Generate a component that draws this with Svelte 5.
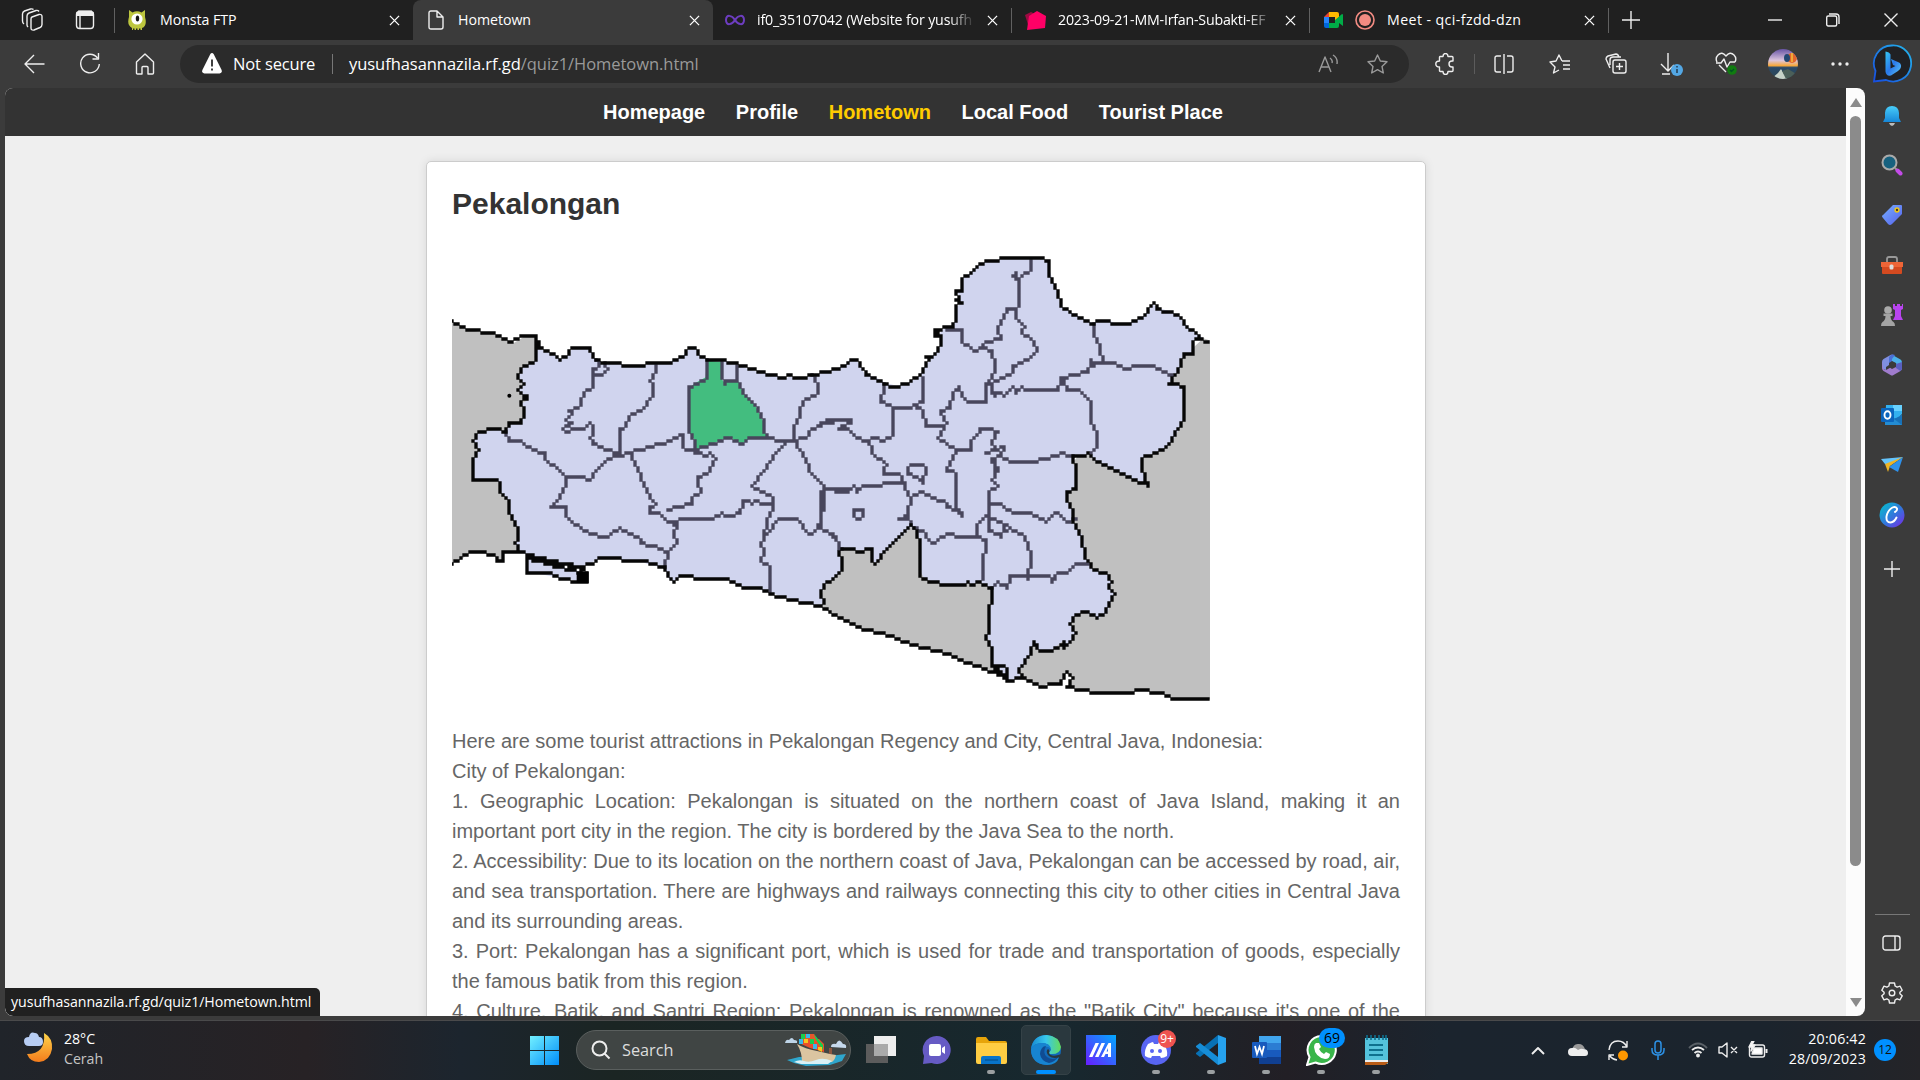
<script>
  const nav = ['Homepage', 'Profile', 'Hometown', 'Local Food', 'Tourist Place'];
  const paragraphs = [
    'Here are some tourist attractions in Pekalongan Regency and City, Central Java, Indonesia:',
    'City of Pekalongan:',
    '1. Geographic Location: Pekalongan is situated on the northern coast of Java Island, making it an important port city in the region. The city is bordered by the Java Sea to the north.',
    '2. Accessibility: Due to its location on the northern coast of Java, Pekalongan can be accessed by road, air, and sea transportation. There are highways and railways connecting this city to other cities in Central Java and its surrounding areas.',
    '3. Port: Pekalongan has a significant port, which is used for trade and transportation of goods, especially the famous batik from this region.'
  ];
  const province =
    'M287 290L295 325 340 340 362 358 380 350 400 322 453 320 457 352 490 370 540 370 560 378 610 378 630 370 680 368 725 350 742 335 747 320 768 320 775 340 800 360 850 360 905 380 960 398 1000 402 1035 418 1050 408 1065 418 1095 415 1120 405 1160 395 1215 376 1230 358 1250 360 1265 385 1275 405 1305 410 1335 428 1370 437 1405 428 1440 408 1450 385 1470 360 1462 350 1475 350 1502 318 1502 290 1485 290 1482 270 1492 270 1498 282 1515 262 1540 258 1550 230 1550 200 1562 190 1550 180 1560 172 1550 155 1568 155 1570 115 1595 95 1610 80 1635 66 1675 60 1680 55 1805 55 1825 65 1830 95 1840 125 1855 160 1862 200 1890 215 1960 250 1975 240 2010 242 2025 250 2065 250 2110 230 2138 192 2155 205 2185 212 2215 228 2245 260 2265 275 2290 295 2265 295 2255 310 2255 338 2228 342 2225 380 2205 405 2188 430 2210 432 2228 445 2228 540 2215 570 2200 600 2180 620 2150 635 2115 650 2105 655 2110 680 2105 690 2115 715 2122 742 2110 725 2065 715 2040 700 2010 680 1960 660 1945 635 1935 645 1900 645 1895 670 1908 680 1905 745 1885 760 1885 785 1898 810 1902 850 1930 890 1938 955 1958 990 2000 995 2015 1030 2010 1045 2022 1060 2015 1080 2002 1120 1975 1135 1940 1120 1925 1115 1905 1125 1892 1150 1905 1180 1892 1210 1875 1220 1870 1202 1835 1230 1800 1230 1778 1210 1772 1240 1750 1275 1735 1295 1745 1318 1700 1320 1685 1300 1675 1280 1658 1280 1658 1230 1640 1185 1650 1170 1650 1100 1658 1090 1658 1045 1630 1035 1615 1025 1595 1035 1580 1028 1575 1035 1515 1035 1480 1025 1452 1015 1442 995 1442 905 1430 875 1415 858 1380 895 1340 930 1305 968 1295 960 1295 928 1255 932 1235 928 1205 928 1195 942 1208 960 1208 992 1185 1010 1155 1035 1145 1060 1150 1085 1140 1100 1055 1078 990 1058 955 1048 910 1042 865 1020 765 1015 745 1005 720 1012 698 1025 680 1010 678 985 630 975 610 967 550 965 540 957 475 957 455 968 440 968 425 985 330 965 265 945 240 935 225 910 238 900 235 860 208 820 205 780 190 765 178 750 178 730 168 720 103 718 98 700 98 660 118 628 100 605 115 580 160 570 170 565 195 575 210 550 245 545 255 510 245 490 265 480 265 467 248 467 235 450 250 435 235 412 245 385 285 362 287 290';
  const west = 'M36 242L85 270 160 282 220 310 250 292 287 290 320 400 300 930 240 935 190 940 190 965 170 965 165 945 130 940 90 937 65 958 36 968Z';
  const east =
    'M2290 295L2314 303 2314 1378 2205 1378 2160 1358 2090 1350 2080 1358 1980 1358 1920 1348 1885 1338 1895 1315 1878 1300 1860 1328 1830 1330 1805 1338 1745 1318 1700 1320 1680 1302 1580 1265 1520 1240 1420 1212 1320 1175 1270 1170 1200 1135 1140 1100 1180 900 1420 840 1700 900 1930 630Z';
  const coast = [
    'M36 242L85 270 160 282 220 310 250 292 287 290',
    'M36 968L65 958 90 937 130 940 165 945 170 965 190 965 190 940 240 935',
    'M2290 295L2306 303',
    'M2306 1378L2205 1378 2160 1358 2090 1350 2080 1358 1980 1358 1920 1348 1885 1338 1895 1315 1878 1300 1860 1328 1830 1330 1805 1338 1745 1318 1700 1320 1680 1302 1580 1265 1520 1240 1420 1212 1320 1175 1270 1170 1200 1135 1140 1100',
    'M248 940L265 955 265 995 330 1002 365 1015 415 1022 440 1022 440 1000 405 980 350 975 265 945',
    'M265 953L300 960 350 984 405 989 425 995',
    'M1655 1280L1690 1310 1700 1318',
    'M1675 1278L1690 1275 1700 1300 1700 1320'
  ];
  const westLines = [
    'M195 575L205 602 245 605 275 630 312 637 318 655 350 680 368 705 382 713 425 712 450 722 460 705 500 655 540 645 565 635 630 625 690 605 725 583 728 620 745 633 775 635',
    'M382 713L380 740 360 775 333 798 375 802 382 830 400 850 450 878 507 888 540 867 590 895 600 908 640 922 680 935 715 908 700 885 712 855 680 850',
    'M680 935L678 985',
    'M470 360L475 378 455 385 460 408 490 408 500 385 495 370',
    'M455 400L455 425 462 437 430 462 420 495 385 512 395 525 382 538 395 550 372 565 385 575 395 567 435 567 450 552 463 567 460 585 448 595 460 612 500 633 540 635',
    'M650 375L648 400 630 425 642 440 635 470 600 515 575 525 560 555 542 565 542 635',
    'M800 362L797 412 765 430 747 445 747 577 768 605 768 632 785 635 800 650 812 640 828 655 800 705 778 712 775 735 787 752 760 775 757 790 715 800 680 810',
    'M565 640L585 665 610 735 635 785 648 793 630 797 630 820 655 822 680 850 745 840 815 840 850 815 858 830 885 832 902 815 905 785 925 780 937 792 950 785 970 792 1003 792',
    'M768 632L820 610 868 590 905 612 930 595 980 592 1035 605 1060 600',
    'M843 365L843 415 855 430 865 420 893 420 910 460 945 495 970 545 975 580 990 595',
    'M893 375L893 420',
    'M1120 405L1132 430 1130 460 1085 487 1078 520 1062 570 1058 600 1100 595 1120 565 1160 545 1215 537',
    'M1045 605L1010 640 975 690 940 742 1003 778 1000 805 985 850 970 890 965 920 975 935 962 965 990 978 992 1055',
    'M970 890L1018 840 1070 840 1105 880 1115 885 1130 860 1148 800 1148 750',
    'M1060 605L1100 655 1105 690 1150 740 1150 750 1230 750',
    'M1130 860L1165 870 1195 905 1195 928'
  ];
  const northLines = [
    'M0 550L35 537 90 537 97 545 65 555 60 565 80 565 110 595 145 605 165 595 195 605 215 585 215 500 185 490 195 430',
    'M145 605L155 640 205 675 195 690',
    'M305 410L305 485 285 492 275 505 235 505 215 500',
    'M285 495L310 510 315 555 370 555 380 550 360 525 365 512 390 500 400 455 415 445 430 465 435 480 450 488 497 488 500 430 515 410 525 375 515 335 480 322 460 330 430 305 430 270 385 268',
    'M480 322L500 305 540 295 530 262 550 225 557 203 588 203 590 230 615 258 605 275 630 295 648 335 625 360 580 380 575 395 545 412 520 430 520 455',
    'M595 200L597 130 585 100 575 110 600 115 635 90 637 60',
    'M505 435L525 465 545 455 555 465 575 445 590 455 605 440 612 447 712 447 725 412 800 398 812 360 825 375 835 368 885 370 910 388 960 380 1005 378 1030 397 1060 403',
    'M822 250L825 290 835 300 845 365',
    'M730 425L740 450 775 450 812 485 815 545 832 575 830 620 815 640',
    'M380 550L350 590 385 608 405 628 440 628 455 632 450 605 475 585 480 565 510 565 530 580 515 605 525 630 500 635 555 620 545 645 575 662 655 662 665 655 712 652 720 643 755 645',
    'M405 628L400 655 385 690',
    'M545 645L520 655 525 690'
  ];
  const southLines = [
    'M10 120L85 122 100 112 115 122 130 112 185 110 195 100 245 102 270 145 265 195 235 210 260 208 275 228',
    'M195 60L195 70 235 75 255 105',
    'M270 42L305 42 315 65 308 100 290 85 262 75 265 55 270 42',
    'M105 180L128 180 128 200 115 208 105 200 105 180',
    'M270 145L308 130 350 155 375 155 385 175 430 190 430 200 410 165 410 75 385 55 395 25',
    'M520 25L530 65 520 90 530 110 510 130 507 245 545 250 570 232',
    'M510 160L545 160 580 190 630 190 680 220 695 195 712 188 740 215 765 208',
    'M275 228L310 240 325 270 345 280 365 262 395 248 420 257 470 258 475 225 500 200 515 208 560 225 545 265',
    'M470 258L500 270 500 310 490 320 487 390',
    'M570 235L610 250 615 272 628 285 633 328 627 385',
    'M515 415L535 395 560 412 567 377 690 377 695 395 715 368 745 365 765 338 800 345',
    'M5 130L5 230 35 250 65 298'
  ];

  // Traces a polyline onto a coarse grid, one square per cell, for the map's stepped borders.
  const CELL = 9;
  function trace(d, dx = 0, dy = 0) {
    const n = d.match(/\d+/g).map(Number);
    const cells = new Set();
    const q = (v) => Math.round(v / CELL);
    for (let i = 0; i + 3 < n.length; i += 2) {
      let x = q(n[i] + dx), y = q(n[i + 1] + dy);
      const x1 = q(n[i + 2] + dx), y1 = q(n[i + 3] + dy);
      const w = Math.abs(x1 - x), h = -Math.abs(y1 - y);
      const sx = x < x1 ? 1 : -1, sy = y < y1 ? 1 : -1;
      let err = w + h;
      cells.add(x + ',' + y);
      while (x !== x1 || y !== y1) {
        const e = 2 * err;
        if (e >= h) { err += h; x += sx; }
        if (e <= w) { err += w; y += sy; }
        cells.add(x + ',' + y);
      }
    }
    return [...cells].map((c) => {
      const [x, y] = c.split(',').map(Number);
      return `M${x * CELL - 5} ${y * CELL - 5}h10v10h-10z`;
    }).join('');
  }
  const inner = [
    ...westLines.map((d) => trace(d)),
    ...northLines.map((d) => trace(d, 1140, 0)),
    ...southLines.map((d) => trace(d, 1140, 630))
  ].join('');
  const outer = [province, ...coast].map((d) => trace(d)).join('');
</script>

{#snippet closeX()}
  <svg class="x" viewBox="0 0 12 12"><path d="M1 1l10 10M11 1L1 11" /></svg>
{/snippet}

<div class="screen">
  <header class="tabs">
    <div class="cell" style:width="64px">
      <svg class="line" width="22" height="24" viewBox="0 0 22 24"><path d="M11 9l7-2.500q3-.5 3 2v8q0 2-2 3l-6 2.500q-3 .5-3-2v-9q0-1.500 1-2ZM7 19q-1-1-1-2V8q0-2 2-3l7-2.500q2-.5 3 1M3 16q-1.500-1-1.500-3V6q0-2 2-3l6-2q2-.5 3 .5" /></svg>
    </div>
    <div class="cell" style:width="42px">
      <svg class="line" width="20" height="20" viewBox="0 0 20 20"><rect x="1.500" y="1.500" width="17" height="17" rx="3" /><path d="M1.500 4h17M3 2.500h14" stroke-width="4" /><path d="M5 6v12" /></svg>
    </div>
    <i class="sep lead"></i>
    <div class="tab first">
      <svg width="18" height="20" viewBox="0 0 18 20"><path fill="#bdc63f" d="M1 0l3.500 2.500Q9 0 13.500 2.500L17 0v7q2.500 9-3 11v2h-1.500v-1.500h-1.500V20H9.500v-1.500H8V20H6.500v-1.500H5V20H4v-2Q-1.500 15 1 7Z" /><circle cx="9" cy="9" r="5.600" fill="#fff" /><ellipse cx="9.500" cy="8.500" rx="1.700" ry="3" fill="#141414" /></svg>
      <span class="t14">Monsta FTP</span>{@render closeX()}
    </div>
    <div class="tab active">
      <svg class="line" width="16" height="20" viewBox="0 0 16 20"><path d="M3 1h6l6 6v10q0 2-2 2H3q-2 0-2-2V3q0-2 2-2ZM9 1v6h6" /></svg>
      <span class="t14">Hometown</span>{@render closeX()}
    </div>
    <div class="tab third">
      <svg width="20" height="12" viewBox="0 0 20 12"><path d="M10 6C7 1 1 0 1 6s6 5 9 0 9-6 9 0-6 5-9 0Z" fill="none" stroke="#6d3dc0" stroke-width="2" /></svg>
      <span class="t14 fade">if0_35107042 (Website for yusufh</span>{@render closeX()}
    </div>
    <i class="sep"></i>
    <div class="tab fourth">
      <svg width="21" height="19" viewBox="0 0 21 19"><path fill="#9c0b42" d="M0 4l6-3 4 2-6 14Z" /><path fill="#f06" d="M12 0l9 5-1 12-18 2 2-14Z" /></svg>
      <span class="t14 fade">2023-09-21-MM-Irfan-Subakti-EF</span>{@render closeX()}
    </div>
    <i class="sep"></i>
    <div class="tab fifth">
      <svg width="19" height="16" viewBox="0 0 19 16"><path fill="#e94235" d="M0 5l5-5v5Z" /><path fill="#2684fc" d="M0 5h5v6H0z" /><path fill="#0066da" d="M0 11h5v5H2q-2 0-2-2Z" /><path fill="#ffba00" d="M5 0h8q2 0 2 2v5l-4 2V5H5Z" /><path fill="#00ac47" d="M5 11h6V8l7-6q1 0 1 1v11l-4-3v3q0 2-2 2H5Z" /></svg>
      <svg class="rec" width="20" height="20" viewBox="0 0 20 20"><circle cx="10" cy="10" r="9" fill="none" stroke="#f28b82" stroke-width="1.600" /><circle cx="10" cy="10" r="6" fill="#f28b82" /></svg>
      <span class="t14 meet">Meet - qci-fzdd-dzn</span>{@render closeX()}
    </div>
    <i class="sep"></i>
    <div class="cell" style:width="45px"><svg class="line" width="18" height="18" viewBox="0 0 18 18"><path d="M9 0v18M0 9h18" /></svg></div>
    <div class="cell winbtns">
      <svg class="line" width="14" height="14" viewBox="0 0 14 14"><path d="M0 7h14" /></svg>
      <svg class="line" width="14" height="14" viewBox="0 0 14 14"><rect x=".7" y="3" width="10" height="10" rx="1.500" /><path d="M3 1h7q3 0 3 3v7" /></svg>
      <svg class="line" width="14" height="14" viewBox="0 0 14 14"><path d="M.5.5l13 13M13.500.5l-13 13" /></svg>
    </div>
  </header>

  <div class="toolbar">
    <div class="cell w56"><svg class="line" width="22" height="20" viewBox="0 0 22 20"><path d="M21.500 10H2M11 1l-9 9 9 9" /></svg></div>
    <div class="cell w56"><svg class="line" width="22" height="22" viewBox="0 0 22 22"><path d="M18.500 5A9.300 9.300 0 1 0 20.300 11M19.500 0v6h-6" /></svg></div>
    <div class="cell w55 home"><svg class="line" width="20" height="22" viewBox="0 0 20 22"><path d="M1.500 9l8.500-8 8.500 8v11q0 1-1 1H13v-6.500q0-1-1-1H8q-1 0-1 1V21H2.500q-1 0-1-1Z" /></svg></div>
    <div class="address">
      <svg width="20" height="21" viewBox="0 0 20 21"><path fill="#fff" d="M10 0q1 0 1.600 1l8 16q.8 3-2 3.500H2.400q-3-.5-2-3.500l8-16Q9 0 10 0Z" /><path d="M10 6.500v7M10 15.500v2" stroke="#2b2b2b" stroke-width="1.800" /></svg>
      <span class="t17 ns">Not secure</span><i></i>
      <span class="t17 url">yusufhasannazila.rf.gd<em>/quiz1/Hometown.html</em></span>
      <svg class="line dim aloud" width="20" height="20" viewBox="0 0 20 20"><path d="M1 18L7 3l6 15M3 13h8M12 4q3 2 2 5M15 1q5 3 4 9" /></svg>
      <svg class="line dim" width="21" height="20" viewBox="0 0 21 20"><path d="M10.500 1l2.800 6 6.700.8-5 4.600 1.300 6.600-5.800-3.300L4.700 19 6 12.400 1 7.800 7.700 7Z" /></svg>
    </div>
    <div class="cell w56 ext"><svg class="line" width="20" height="22" viewBox="0 0 20 22"><path d="M5 3.500h3q0-3 2.500-3t2.500 3h4q1 0 1 1v3.500h-1q-3 0-3 3t3 3h1v3.500q0 1-1 1h-4q0 3-2.500 3T8 18.500H5.500q-1 0-1-1V14Q.8 14 .8 11t3.700-3V4.500q0-1 .5-1Z" /></svg></div>
    <i class="tsep"></i>
    <div class="cell w56"><svg class="line" width="20" height="20" viewBox="0 0 20 20"><path d="M7 2H3Q1 2 1 4v12q0 2 2 2h4M13 2h4q2 0 2 2v12q0 2-2 2h-4M10 0v20" /></svg></div>
    <div class="cell w56"><svg class="line" width="22" height="20" viewBox="0 0 22 20"><path d="M13 7l-3-6-3 6-6 1 5 5-1.500 6L10 16M13 7h8M14 11h7M14 15h7" /></svg></div>
    <div class="cell w55"><svg class="line" width="22" height="21" viewBox="0 0 22 21"><rect x="8" y="7" width="13" height="13" rx="2" /><path d="M14.500 10v7M11 13.500h7M5 15L1 6q0-2 2-3l8-2q2 0 3 3M5 12V7q0-3 3-3h8" /></svg></div>
    <div class="cell w56"><svg class="line" width="24" height="24" viewBox="0 0 24 24"><path d="M9 1v17M2 12l7 7 6-6M3 22h8" /><circle cx="18" cy="18" r="6" fill="#53a7e4" stroke="none" /><path d="M18 17v4M18 14v1.500" stroke="#234" /></svg></div>
    <div class="cell w55 heart"><svg class="line" width="22" height="23" viewBox="0 0 22 23"><path d="M2 10q-2-4 1-7 4-4 8 1 4-5 8-1 3 3 1 7M1 11h5l3-4 3 8 3-5h5M4 13l7 7" /><circle cx="17" cy="18" r="4.800" fill="#107c10" stroke="none" /><path d="M15 18l1.500 1.500L19 17" stroke="#052" /></svg></div>
    <div class="cell w57">
      <svg width="30" height="30" viewBox="0 0 30 30"><defs><clipPath id="av"><circle cx="15" cy="15" r="15" /></clipPath><linearGradient id="sky" x2="0" y2="1"><stop stop-color="#6754a5" /><stop offset=".38" stop-color="#dcc5dd" /><stop offset=".55" stop-color="#f7a93f" /><stop offset=".62" stop-color="#2a4968" /><stop offset="1" stop-color="#2b4552" /></linearGradient></defs><g clip-path="url(#av)"><path fill="url(#sky)" d="M0 0h30v30H0z" /><circle cx="24" cy="9" r="5" fill="#e2662c" /><path d="M24 4v9" stroke="#f5c13c" stroke-width="1.500" /><ellipse cx="19" cy="9" rx="3" ry="4" fill="#234873" /><path d="M3 30l7-6 3-4 3 5 4 5Z" fill="#c6d2c8" /><path d="M14 22l6-2 10 6v4H18Z" fill="#4b5f59" /></g></svg>
    </div>
    <div class="cell w57"><svg width="18" height="4" viewBox="0 0 18 4" fill="#eee"><circle cx="2" cy="2" r="1.700" /><circle cx="9" cy="2" r="1.700" /><circle cx="16" cy="2" r="1.700" /></svg></div>
    <div class="cell bing"><svg width="40" height="40" viewBox="0 0 40 40"><defs><linearGradient id="bg" x1="1" x2="0" y2="1"><stop stop-color="#24b8ee" /><stop offset="1" stop-color="#174de0" /></linearGradient><linearGradient id="bb" x2="1" y2="1"><stop stop-color="#35c6f4" /><stop offset=".5" stop-color="#2a78ea" /><stop offset="1" stop-color="#5cc9f7" /></linearGradient></defs><path d="M20 1.500A18 18 0 1 1 14 36L2 37.500 3.500 27A18 18 0 0 1 20 1.500Z" fill="#202124" stroke="url(#bg)" stroke-width="1.800" /><path d="M13.500 7.500q4 .5 5 3v14l5-2.500-2.500-1-2-6 8 3.500q2.500 1.500 2 4.500-.5 2.500-3 4l-7 4.500q-5 1-5.500-4Z" fill="url(#bb)" /></svg></div>
  </div>

  <div class="body">
    <div class="page">
      <nav>{#each nav as item}<a class:on={item === 'Hometown'}>{item}</a>{/each}</nav>
      <main>
        <article>
          <h1>Pekalongan</h1>
          <svg class="map" viewBox="36 12 2274 1374">
            <path class="land" d={west} /><path class="land" d={east} />
            <path class="prov" d={province} />
            <path class="prov" d="M265 955V995L365 1015 415 1022 440 1000Z" />
            <path d="M800 362L797 412 765 430 747 445 747 577 768 605 768 632 820 610 868 590 905 612 930 595 990 595 975 580 970 545 945 495 910 460 893 420 865 420 855 430 843 415 843 365Z" fill="#43bd7f" />
            <path d={inner} fill="#48465c" />
            <path d={outer} fill="#060606" />
            <path d="M410 995h36v34h-36z" /><circle cx="208" cy="467" r="6" />
          </svg>
          {#each paragraphs as p}<p>{p}</p>{/each}
          <p class="last">4. Culture, Batik, and Santri Region: Pekalongan is renowned as the "Batik City" because it's one of the</p>
        </article>
      </main>
      <div class="status t14">yusufhasannazila.rf.gd/quiz1/Hometown.html</div>
    </div>
    <div class="scroll">
      <svg width="12" height="9" viewBox="0 0 12 9"><path d="M6 0l6 9H0Z" fill="#8b8b8b" /></svg>
      <div class="thumb"></div>
      <svg class="down" width="12" height="9" viewBox="0 0 12 9"><path d="M0 0h12L6 9Z" fill="#8b8b8b" /></svg>
    </div>
    <aside>
      <div class="side s1"><svg width="18" height="22" viewBox="0 0 18 22"><defs><linearGradient id="bell" x2="0" y2="1"><stop stop-color="#48cdfa" /><stop offset="1" stop-color="#1787d8" /></linearGradient></defs><path d="M9 1q6.500 0 7 7v5l2 4H0l2-4V8q.5-7 7-7Z" fill="url(#bell)" /><path d="M6 18h6q-1 3-3 3t-3-3Z" fill="#bbb" /></svg></div>
      <div class="side mag"><svg width="22" height="22" viewBox="0 0 22 22"><circle cx="8.500" cy="8.500" r="7" fill="#17617f" stroke="#aaa" stroke-width="2" /><path d="M14 14l2 2" stroke="#999" stroke-width="2" /><path d="M16.500 16.500l3 3" stroke="#c34be8" stroke-width="4" stroke-linecap="round" /></svg></div>
      <div class="side"><svg width="22" height="22" viewBox="0 0 22 22"><defs><linearGradient id="tag" x2="1" y2="1"><stop stop-color="#77b0ff" /><stop offset="1" stop-color="#5560ec" /></linearGradient></defs><path d="M12 1h8q1 0 1 1v8L11 20q-2 2-4 0l-5-6q-2-2 0-3Z" fill="url(#tag)" /><circle cx="16" cy="6" r="1.900" fill="#432" stroke="#ecc51c" stroke-width="1.500" /></svg></div>
      <div class="side box"><svg width="24" height="20" viewBox="0 0 24 20"><path d="M7 7V4q0-2 2-2h6q2 0 2 2v3" fill="none" stroke="#999" stroke-width="1.800" /><path d="M1 7h22v5H1z" fill="#ee6537" /><path d="M2 12h20v6q0 1-1 1H3q-1 0-1-1Z" fill="#d44a20" /><rect x="9.500" y="9.500" width="4" height="5" rx="1.500" fill="#ddd" /></svg></div>
      <div class="side"><svg width="24" height="24" viewBox="0 0 24 24"><path d="M13 1h2v2h2V1h3v2h2V1h1v5l-2 1v6l2 4H13l2-4V7l-2-1Z" fill="#b844ef" /><circle cx="8" cy="7" r="3.800" fill="#aaa" /><path d="M3.500 10.500h9v2.500h-2q0 4 3 6 1.500 1 1.500 4H1q0-3 1.500-4 3-2 3-6h-2Z" fill="#a4a4a4" /></svg></div>
      <div class="side"><svg width="22" height="22" viewBox="0 0 22 22"><path d="M9.500 1q1.500-1 3 0L8 4v7l-3 2v3l-3-1q-1-.6-1-2V8q0-2 1.500-3Z" fill="#7f8fe0" /><path d="M8 4l3.500-3 8 4.500q1.500 1 1.500 3V14l-6-4.500L8 6Z" fill="#4bb0e8" /><path d="M8 3v8l3-2V5l3-4q-2-1-4 0Z" fill="#4a6fd4" /><path d="M1 7l1 7.500q2 2 4 1l9-5 6 3.500q0 2-1.500 3l-7 4q-1.500 1-3 0l-7-4Q1 16 1 14Z" fill="#a07ccd" /><path d="M15 10l6-2v6q0 2-1.500 3L15 14Z" fill="#5a60c0" /><path d="M8 9l3-2 4 2v4l-4 2-3-2Z" fill="#3b3b3b" /></svg></div>
      <div class="side"><svg width="22" height="22" viewBox="0 0 22 22"><path d="M5 1h16v9l-2 2v9H4Z" fill="#33b1ef" /><path d="M12 1h9v6h-9z" fill="#68d1ff" /><path d="M4 14h12l5-3v10H4Z" fill="#238cd3" /><path d="M21 11v10l-8-6Z" fill="#1871b8" /><rect y="4" width="13" height="14" rx="1" fill="#0b65bd" /><ellipse cx="6.500" cy="11" rx="3" ry="3.700" fill="none" stroke="#fff" stroke-width="1.900" /></svg></div>
      <div class="side"><svg width="23" height="18" viewBox="0 0 23 18"><path d="M0 3L22 1 9 9 4 8Z" fill="#65c4fb" /><path d="M22 1L4 8l3 8 2-6Z" fill="#eeb424" /><path d="M22 1L8 11l9 5Z" fill="#2e91eb" /></svg></div>
      <div class="side"><svg width="26" height="26" viewBox="0 0 26 26"><defs><linearGradient id="cv" x2="1" y2="1"><stop stop-color="#00c4cc" /><stop offset=".55" stop-color="#3474dc" /><stop offset="1" stop-color="#7d24e8" /></linearGradient></defs><circle cx="13" cy="13" r="12.500" fill="url(#cv)" /><path d="M16 10q2.500-1 2-3.500-1.500-2.500-4.500-1-5 3-6 9-.5 6 4 6 4-.5 6-5" fill="none" stroke="#fff" stroke-width="1.900" stroke-linecap="round" /></svg></div>
      <div class="side plus"><svg class="line" width="16" height="16" viewBox="0 0 16 16"><path d="M8 0v16M0 8h16" /></svg></div>
      <div class="foot"><i></i>
        <svg class="line" width="20" height="16" viewBox="0 0 20 16"><rect x="1" y="1" width="17" height="14" rx="2.500" /><path d="M13 1v14" /></svg>
        <svg class="line gear" width="22" height="22" viewBox="0 0 22 22"><path d="M8.500 1h5l.6 3 2 1.200 3-1 2.100 4.100-2.300 2v1.500l2.300 2-2.300 4-2.800-1-2 1.200-.6 3h-5l-.6-3-2-1.200-2.900 1-2.200-4 2.300-2v-1.500l-2.300-2L3 4.200l2.900 1 2-1.200Z" /><circle cx="11" cy="11" r="2.800" /></svg>
      </div>
    </aside>
  </div>

  <footer>
    <svg class="moon" width="30" height="36" viewBox="0 0 30 36"><defs><linearGradient id="mn" x2="0" y2="1"><stop stop-color="#ffd54b" /><stop offset="1" stop-color="#f47c1c" /></linearGradient></defs><path d="M20 3q9 5 8 16-2 12-13 13-9 0-12-8 19 0 17-21Z" fill="url(#mn)" /><path d="M5 16q-5 0-5-5 0-4 5-4 1-6 6-4 3 0 4 4 4 0 4 5 0 4-4 4Z" fill="#b7cdf4" /></svg>
    <div class="weather t14"><span>28°C</span><span>Cerah</span></div>
    <div class="start"><svg width="29" height="29" viewBox="0 0 29 29"><defs><linearGradient id="w" x2="1" y2="1"><stop stop-color="#72f0ff" /><stop offset="1" stop-color="#008df8" /></linearGradient></defs><path fill="url(#w)" d="M0 0h14v14H0zM15 0h14v14H15zM0 15h14v14H0zM15 15h14v14H15z" /></svg></div>
    <div class="search">
      <svg class="glass" width="20" height="20" viewBox="0 0 20 20"><circle cx="8.500" cy="8.500" r="7" /><path d="M13.500 13.500l5 5" /></svg>
      <span>Search</span>
      <svg width="62" height="34" viewBox="0 0 62 34"><path d="M2 27l12-3 30-1 17-2-4 7-12 4-24 1-12-3Z" fill="#2fa6cc" /><path d="M12 11q8 5 20 7l13 3 6 1q-1 5-4 7H17q0-10-5-18Z" fill="#dbc5a1" />
        <path d="M16 1h13l4 6H16Z" fill="#e5562c" /><path d="M14 6h20l5 5v8l-14-4-11-5Z" fill="#e94f2b" /><path d="M16 1h4v5h-4zM29 1l4 5 5 6v5l-7-10ZM25 6h4v5h-4z" fill="#17ce4f" /><path d="M21 1h4v4h-4zM14 6h4v5h-4zM28 11h4v5h-4z" fill="#39b8ed" /><path d="M19 6h4v4h-4zM33 14h4v5l-4-2z" fill="#f7c61b" />
        <path d="M9 29q5-3 10-1t12-1 16 1l-4 3H16Z" fill="#d8f0f5" /><path d="M44 15h3v6h-3" fill="#8d5740" /><path d="M0 10q1-4 4-3 3-4 5 0 4 0 3 3Z" fill="#bed4e7" /><path d="M46 14q0-4 5-3 3-7 7 0 4 0 3 4Z" fill="#c6d9ed" /></svg>
    </div>
    <div class="apps">
      <div><svg width="30" height="28" viewBox="0 0 30 28"><path fill="#eee" d="M8 0h22v20H8z" /><path fill="#5c5c5c" d="M0 8h22v19H0z" /><path fill="#aaa" d="M8 8h14v12H8z" /></svg></div>
      <div><svg width="29" height="28" viewBox="0 0 29 28"><path d="M14.500 0a14 14 0 1 1-5 27L1 28l1-8A14 14 0 0 1 14.500 0Z" fill="#665bc4" /><rect x="7" y="8" width="12" height="12" rx="2" fill="#fff" /><path d="M20 12l3-2v8l-3-2Z" fill="#fff" /></svg></div>
      <div class="run"><svg width="31" height="27" viewBox="0 0 31 27"><path d="M0 2q0-2 2-2h8l3 4h16q2 0 2 2v19H0Z" fill="#e7a40a" /><path d="M0 6h31v19q0 2-2 2H2q-2 0-2-2Z" fill="#ffcd43" /><path d="M5 27v-6q0-2 2-2h16q2 0 2 2v6Z" fill="#0874ca" /><path d="M9 23h13" stroke="#044880" /></svg></div>
      <div class="run current"><svg width="30" height="30" viewBox="0 0 30 30"><defs><linearGradient id="e1" x2="1"><stop stop-color="#1688d2" /><stop offset=".5" stop-color="#38c7ec" /><stop offset="1" stop-color="#65dc59" /></linearGradient></defs><circle cx="15" cy="15" r="15" fill="#126bbb" /><path d="M0 14Q2 0 16 0q12 1 14 12-1 8-11 7-2-1 1-4-1-7-9-7Q3 8 0 14Z" fill="url(#e1)" /><path d="M0 14Q3 8 11 8q8 0 9 6-4-4-8-1-6 9 5 12 7 1 11-3-2 8-12 8Q0 29 0 14Z" fill="#1784d0" /><path d="M15 11q-5 0-6 8 1 7 9 9 6-1 9-6-5 4-11 0-5-4-1-11Z" fill="#104c93" /><path d="M17 14q2 1 1 4 2 5 13 1v2q-8 4-13 0-4-4-1-7Z" fill="#2a383e" /></svg></div>
      <div><svg width="30" height="30" viewBox="0 0 30 30"><defs><linearGradient id="ma" x1="1" x2="0" y2="1"><stop stop-color="#00aaff" /><stop offset="1" stop-color="#691cff" /></linearGradient></defs><path d="M0 0h30v30H0z" fill="url(#ma)" /><path d="M3 22L9.500 8h3.500L6.500 22ZM9 22l6.500-14H19l-6.500 14ZM15 22l7.500-14H25v14h-3v-3h-2.500L18 22ZM20.500 16.500H22V13Z" fill="#fff" /></svg></div>
      <div class="run"><svg width="30" height="30" viewBox="0 0 30 30"><circle cx="15" cy="15" r="15" fill="#5865f2" /><path d="M7 9q4-2 5-2l1 2h4l1-2q2 0 5 2 4 6 3 12-3 2-6 2l-1-2h-8l-1 2q-3 0-6-2-1-6 3-12Z" fill="#fff" /><circle cx="11" cy="16" r="2" fill="#5865f2" /><circle cx="19" cy="16" r="2" fill="#5865f2" /></svg><b>9+</b></div>
      <div class="run"><svg width="30" height="30" viewBox="0 0 30 30"><path d="M22 0l8 3v24l-8 3Z" fill="#26a2ee" /><path d="M22 0v8L4 22l-4-3v-1Z" fill="#0871b5" /><path d="M22 30v-8L4 8l-4 3v1Z" fill="#168dd7" /></svg></div>
      <div class="run"><svg width="29" height="28" viewBox="0 0 29 28"><path fill="#41a5ee" d="M7 0h22v7H7z" /><path fill="#2b7cd3" d="M7 7h22v7H7z" /><path fill="#185abd" d="M7 14h22v7H7z" /><path fill="#103f91" d="M7 21h22v7H7z" /><rect y="6" width="15" height="16" rx="1" fill="#185abd" /><path d="M3 10l2 8 2.500-7 2.500 7 2-8" stroke="#fff" stroke-width="1.800" fill="none" /></svg></div>
      <div class="run"><svg width="31" height="31" viewBox="0 0 31 31"><path d="M15.500 1a14 14 0 1 1-6 26.500L1 30l2.500-8A14 14 0 0 1 15.500 1Z" fill="#39b54a" stroke="#fff" stroke-width="2" /><path d="M10 8l3 0 2 4-2 2q2 4 5 5l2-2 4 2q0 5-5 5Q9 22 8 12q0-3 2-4Z" fill="#fff" /></svg><b class="wa">69</b></div>
      <div class="run"><svg width="23" height="30" viewBox="0 0 23 30"><path d="M0 3h23v26H0z" fill="#54c2dc" /><path d="M0 26h23v2l-3 2H0Z" fill="#b95c17" /><path d="M0 25h23v2H0z" fill="#eee" /><path d="M2 0v5M6 0v5M10 0v5M14 0v5M18 0v5M21 0v5" stroke="#0e708f" stroke-width="1.600" /><path d="M4 10h14M4 15h14M4 20h14" stroke="#0e708f" stroke-width="2" /></svg></div>
    </div>
    <div class="tray">
      <div><svg class="line thick" width="14" height="9" viewBox="0 0 14 9"><path d="M1 8l6-6 6 6" /></svg></div>
      <div><svg width="20" height="14" viewBox="0 0 20 14"><path d="M4 8Q5 0 11 1q4 0 6 5Z" fill="#999" /><path d="M4 13Q0 13 0 9t4-4q3-1 6 2 3-2 5-1 5 0 5 4 0 3-3 3Z" fill="#eee" /></svg></div>
      <div><svg class="line" width="20" height="21" viewBox="0 0 20 21"><path d="M1 10Q2 1 10 1q6 0 9 6M19 1v6h-5M1 20v-5h5M2 16q2 3 7 4" /><circle cx="15" cy="15.500" r="5" fill="#ff9800" stroke="none" /></svg></div>
      <div><svg width="14" height="20" viewBox="0 0 14 20" fill="none" stroke="#2d91e6" stroke-width="1.500"><rect x="4" y="1" width="6" height="12" rx="3" /><path d="M1 8v2q0 5 6 5t6-5V8M7 15v5" /></svg></div>
      <div><svg class="line thick" width="20" height="16" viewBox="0 0 20 16"><path d="M1 6q9-9 18 0" opacity=".3" /><path d="M4 8q6-5 12 0M6.500 11q3.500-3 7 0" /><circle cx="10" cy="13.500" r="1" /></svg></div>
      <div class="vol"><svg class="line" width="20" height="16" viewBox="0 0 20 16"><path d="M1 5h3l5-4v14l-5-4H1ZM13 5l6 6M19 5l-6 6" /></svg></div>
      <div class="bat"><svg class="line" width="20" height="18" viewBox="0 0 20 18"><rect x="1.500" y="4" width="15" height="12" rx="2" /><path d="M6 7h8v6H4z" fill="#fff" /><path d="M18.500 8v4" stroke-width="2" /><path d="M4 0L1 6h3l-1 4 4-6H4l2-4Z" fill="#fff" /></svg></div>
    </div>
    <div class="clock t14"><span>20:06:42</span><span>28/09/2023</span></div>
    <div class="count">12</div>
  </footer>
</div>

<style>
  :global(body) { margin: 0; background: #202020; }
  .screen { width: 1920px; height: 1080px; overflow: hidden; display: flex; flex-direction: column; background: #3b3b3b; font-family: "Open Sans", "Noto Sans", sans-serif; color: #fff; }
  svg { display: block; flex: none; }
  .line { fill: none; stroke: #eee; stroke-width: 1.4; stroke-linejoin: round; }
  .thick { stroke-width: 1.9; }
  .dim { stroke: #9a9a9a; }
  .cell { display: flex; align-items: center; justify-content: center; flex: none; }
  .t14 { font-size: 14.2px; letter-spacing: -0.05px; white-space: nowrap; }
  .t17 { font-size: 16.5px; letter-spacing: -0.05px; white-space: nowrap; }
  .ns.t17 { letter-spacing: -0.15px; }
  .tabs { height: 40px; flex: none; display: flex; align-items: center; background: #202020; }
  .sep { width: 1px; height: 25px; background: #616161; flex: none; margin-right: -1px; }
  .lead { margin-left: 8px; }
  .tab { height: 40px; box-sizing: border-box; display: flex; align-items: center; flex: none; }
  .tab > span { flex: 1; min-width: 0; overflow: hidden; margin-left: 14px; line-height: 22px; }
  .x { width: 11px; height: 11px; margin-right: 13px; fill: none; stroke: #fff; stroke-width: 1.4; }
  .first { width: 299px; padding-left: 14px; }
  .active { width: 300px; padding-left: 15px; background: #3b3b3b; border-radius: 8px 8px 0 0; }
  .third { width: 298px; padding-left: 12px; }
  .fourth { width: 298px; padding-left: 14px; }
  .fifth { width: 299px; padding-left: 15px; }
  .tab > .fade { margin-right: 12px; margin-left: 12px; mask-image: linear-gradient(90deg, #000 88%, transparent); }
  .fourth > .fade { letter-spacing: -0.2px; }
  .third > .fade { letter-spacing: -0.15px; }
  .rec { margin-left: 12px; }
  .fifth > .meet { margin-left: 12px; letter-spacing: 0.4px; }
  .winbtns { margin-left: auto; gap: 44px; padding-right: 22px; }
  .toolbar { height: 48px; flex: none; display: flex; align-items: center; padding-left: 6px; box-sizing: border-box; padding-bottom: 1px; }
  .w55 { width: 55px; } .w56 { width: 56px; } .w57 { width: 57px; }
  .home, .heart { box-sizing: border-box; padding-right: 2px; }
  .address { margin-left: 7px; width: 1229px; height: 38px; border-radius: 19px; background: #2b2b2b; display: flex; align-items: center; box-sizing: border-box; padding: 0 21px 0 22px; flex: none; }
  .address > i { width: 1px; height: 20px; background: #777; margin-right: 16px; }
  .ns { margin-left: 11px; width: 99px; }
  em { font-style: normal; color: #9a9a9a; }
  .aloud { margin-left: auto; margin-right: 29px; }
  .ext { margin-left: 8px; }
  .tsep { width: 1px; height: 20px; background: #5c5c5c; margin: 0 1px; }
  .bing { width: 48px; }
  .body { height: 932px; flex: none; display: flex; padding-left: 5px; }
  .page { width: 1841px; height: 928px; overflow: hidden; background: #efefef; border-radius: 8px 0 0 8px; position: relative; }
  nav { height: 48px; background: #333; display: flex; gap: 30.6px; padding-left: 598px; font: bold 20px/48px "Liberation Sans", Arial, sans-serif; }
  nav a { color: #fff; } nav .on { color: #ffcc00; }
  main { padding: 25px 0 0 421px; }
  article { width: 1000px; height: 900px; box-sizing: border-box; padding: 25px; background: #fff; border: 1px solid #ccc; border-radius: 5px; box-shadow: 0 0 10px rgba(0, 0, 0, 0.1); font-family: "Liberation Sans", Arial, sans-serif; }
  h1 { margin: 0; font-size: 30px; line-height: 34px; color: #333; }
  .map { width: 758px; height: 458px; margin: 23px 0 24px; }
  .land { fill: #c0c0c0; } .prov { fill: #d0d4ee; }
  p { margin: 0; font-size: 20px; line-height: 30px; color: #666; text-align: justify; }
  .last { text-align-last: justify; }
  .status { position: absolute; left: 0; bottom: 0; width: 315px; height: 28px; box-sizing: border-box; padding-left: 6px; line-height: 27px; background: #202020; border-radius: 0 5px 0 8px; }
  .scroll { width: 19px; height: 928px; background: #fcfcfc; border-radius: 0 8px 8px 0; display: flex; flex-direction: column; align-items: center; box-sizing: border-box; padding: 10px 0 9px; }
  .thumb { width: 11px; height: 750px; border-radius: 6px; background: #8b8b8b; margin-top: 9px; }
  .down { margin-top: auto; }
  aside { width: 54px; height: 932px; display: flex; flex-direction: column; align-items: center; }
  .side { height: 50px; width: 54px; display: flex; align-items: center; justify-content: center; flex: none; }
  .s1 { margin-top: 3px; height: 49px; }
  .mag, .box { box-sizing: border-box; padding-bottom: 1px; }
  .plus { margin-top: 4px; }
  .foot { margin-top: auto; height: 106px; display: flex; flex-direction: column; align-items: center; }
  .foot i { width: 35px; height: 1px; background: #777; margin-bottom: 20px; }
  .gear { margin-top: 31px; }
  footer { height: 60px; flex: none; box-sizing: border-box; border-top: 1px solid #4a4a4b; display: flex; align-items: center; background: linear-gradient(90deg, #20242a 0, #272225 16%, #1c252e 24%, #1b2523 32%, #17282f 55%, #221f25 67%, #1b242e 75%, #1b242d 92%, #242428 100%); padding-bottom: 1px; }
  .moon { margin-left: 24px; margin-top: -4px; }
  .weather { width: 455px; margin-left: 10px; display: flex; flex-direction: column; line-height: 20px; flex: none; margin-top: -2px; }
  .weather span + span { color: #c5c5c5; }
  .start { width: 50px; display: flex; justify-content: center; }
  .search { margin-left: 7px; width: 275px; height: 40px; box-sizing: border-box; border: 1px solid #5a5f5e; border-radius: 20px; background: #404544; display: flex; align-items: center; padding: 0 3px 0 14px; flex: none; }
  .search span { margin-left: 11px; font-size: 16.3px; color: #ddd; flex: 1; }
  .glass { fill: none; stroke: #eee; stroke-width: 2; }
  .apps { display: flex; gap: 5px; margin-left: 5px; }
  .apps > div { width: 50px; height: 50px; display: flex; align-items: center; justify-content: center; position: relative; border-radius: 5px; box-sizing: border-box; }
  .apps > .current { background: #2a383e; border: 1px solid #354247; }
  .run::after { content: ""; position: absolute; left: 21px; bottom: 1px; width: 8px; height: 4px; border-radius: 2px; background: #9b9fa1; }
  .current::after { left: 14px; bottom: 0; width: 20px; background: #0090ff; }
  b { position: absolute; left: 27px; top: 5px; min-width: 18px; height: 18px; border-radius: 10px; background: #ef5350; font: 12px/17px "Open Sans", sans-serif; text-align: center; }
  b.wa { left: 23px; top: 3px; width: 26px; height: 20px; line-height: 20px; font-size: 14px; background: #0090ff; color: #000; }
  .tray { display: flex; margin-left: 117px; }
  .tray > div { width: 40px; height: 30px; display: flex; align-items: center; justify-content: center; }
  .tray .vol { width: 20px; } .tray .bat { width: 40px; }
  .clock { margin-left: auto; display: flex; flex-direction: column; align-items: flex-end; line-height: 20px; margin-right: 8px; margin-top: -2px; }
  .clock.t14 { letter-spacing: 0.2px; }
  .count { width: 22px; height: 22px; border-radius: 50%; background: #0090ff; color: #111; text-align: center; font-size: 12px; line-height: 21px; margin-right: 24px; }
</style>
